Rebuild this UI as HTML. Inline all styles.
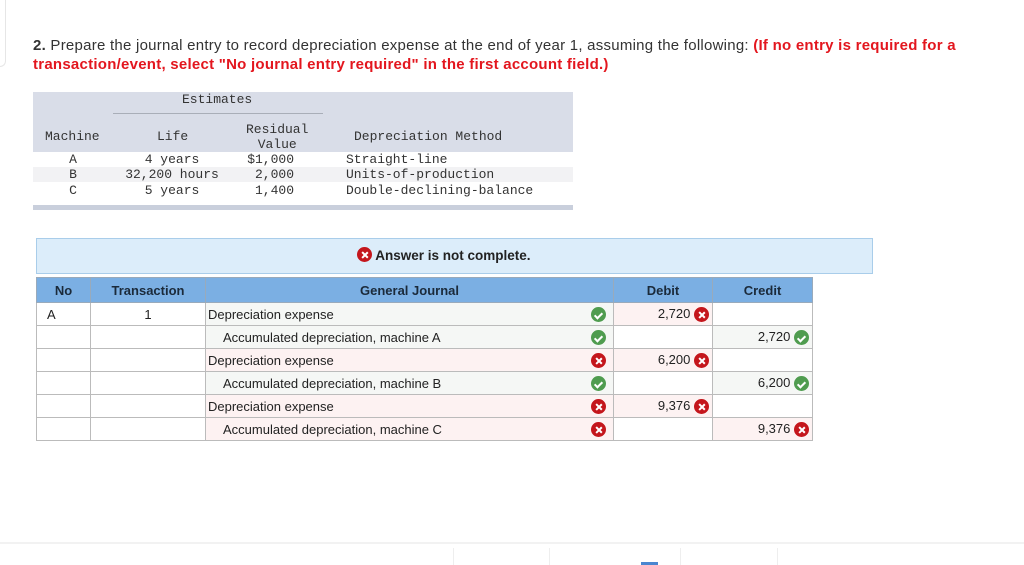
<!DOCTYPE html>
<html><head><meta charset="utf-8"><style>
body{margin:0;width:1024px;height:565px;background:#fff;position:relative;overflow:hidden;font-family:"Liberation Sans",Arial,sans-serif;color:#222}
.a{position:absolute}
.q{left:33px;top:36px;font-size:15px;letter-spacing:0.25px;line-height:19px;color:#333;width:960px}
.q .r{color:#e3161e;font-weight:bold}
.mono{font-family:"Liberation Mono",monospace;font-size:13px;color:#333}
.ic{display:inline-block;width:15px;height:15px;border-radius:50%;vertical-align:middle;position:relative}
.ok{background:#4f9c4f}.no{background:#c4161c}
.ok:after{content:"";position:absolute;left:4.5px;top:3.5px;width:3px;height:6px;border:solid #fff;border-width:0 2px 2px 0;transform:rotate(45deg)}
.no:before,.no:after{content:"";position:absolute;left:7px;top:3.5px;width:1.8px;height:8px;background:#fff;transform:rotate(45deg)}
.no:after{transform:rotate(-45deg)}
table.j{position:absolute;left:36px;top:277px;border-collapse:collapse;font-size:13px}
.j td,.j th{border:1px solid #bbb;height:23px;padding:0;box-sizing:border-box}
.j th{background:#7bafe3;font-weight:bold;color:#1b2a3a;text-align:center;border-color:#9ab;height:25px}
.g{background:#f5f7f5}.p{background:#fdf2f2}
.num{text-align:right;padding-right:3px!important}
</style></head><body>
<div class="a" style="left:0;top:0;width:5px;height:66px;border-right:1px solid #e6e6e6;border-bottom:1px solid #e6e6e6;border-bottom-right-radius:6px"></div>
<div class="a q"><b>2.</b> Prepare the journal entry to record depreciation expense at the end of year 1, assuming the following: <span class="r">(If no entry is required for a transaction/event, select "No journal entry required" in the first account field.)</span></div>

<div class="a" style="left:33px;top:92px;width:540px;height:60px;background:#d9dde8"></div>
<div class="a" style="left:33px;top:167px;width:540px;height:15px;background:#f2f2f4"></div>
<div class="a" style="left:33px;top:205px;width:540px;height:5px;background:#c9cfdc"></div>
<div class="a" style="left:113px;top:113px;width:210px;height:1px;background:#a9aeb8"></div>
<div class="a mono" style="left:182px;top:92px">Estimates</div>
<div class="a mono" style="left:45px;top:129px">Machine</div>
<div class="a mono" style="left:157px;top:129px">Life</div>
<div class="a mono" style="left:246px;top:122px;text-align:center;line-height:15px">Residual<br>Value</div>
<div class="a mono" style="left:354px;top:129px">Depreciation Method</div>
<div class="a mono" style="left:33px;top:152px;width:80px;text-align:center;line-height:15.3px">A<br>B<br>C</div>
<div class="a mono" style="left:113px;top:152px;width:118px;text-align:center;line-height:15.3px">4 years<br>32,200 hours<br>5 years</div>
<div class="a mono" style="left:236px;top:152px;width:58px;text-align:right;line-height:15.3px">$1,000<br>2,000<br>1,400</div>
<div class="a mono" style="left:346px;top:152px;line-height:15.3px">Straight-line<br>Units-of-production<br>Double-declining-balance</div>

<div class="a" style="left:36px;top:238px;width:835px;height:34px;background:#dcedfa;border:1px solid #a9cdea"></div>
<div class="a" style="left:357px;top:247px;font-size:13.5px;font-weight:bold;color:#222"><span class="ic no" style="vertical-align:-2px"></span> Answer is not complete.</div>

<table class="j">
<tr><th style="width:54px">No</th><th style="width:115px">Transaction</th><th style="width:408px">General Journal</th><th style="width:99px">Debit</th><th style="width:100px">Credit</th></tr>
<tr><td style="padding-left:10px">A</td><td style="text-align:center">1</td><td class="g" style="position:relative;padding-left:2px">Depreciation expense<span class="ic ok" style="position:absolute;right:7px;top:4px"></span></td><td class="p num">2,720 <span class="ic no"></span></td><td></td></tr>
<tr><td></td><td></td><td class="g" style="position:relative;padding-left:17px">Accumulated depreciation, machine A<span class="ic ok" style="position:absolute;right:7px;top:4px"></span></td><td></td><td class="g num">2,720 <span class="ic ok"></span></td></tr>
<tr><td></td><td></td><td class="p" style="position:relative;padding-left:2px">Depreciation expense<span class="ic no" style="position:absolute;right:7px;top:4px"></span></td><td class="p num">6,200 <span class="ic no"></span></td><td></td></tr>
<tr><td></td><td></td><td class="g" style="position:relative;padding-left:17px">Accumulated depreciation, machine B<span class="ic ok" style="position:absolute;right:7px;top:4px"></span></td><td></td><td class="g num">6,200 <span class="ic ok"></span></td></tr>
<tr><td></td><td></td><td class="p" style="position:relative;padding-left:2px">Depreciation expense<span class="ic no" style="position:absolute;right:7px;top:4px"></span></td><td class="p num">9,376 <span class="ic no"></span></td><td></td></tr>
<tr><td></td><td></td><td class="p" style="position:relative;padding-left:17px">Accumulated depreciation, machine C<span class="ic no" style="position:absolute;right:7px;top:4px"></span></td><td></td><td class="p num">9,376 <span class="ic no"></span></td></tr>
</table>

<div class="a" style="left:0;top:542px;width:1024px;height:2px;background:#f2f2f2"></div>
<div class="a" style="left:453px;top:548px;width:1px;height:17px;background:#eee"></div>
<div class="a" style="left:549px;top:548px;width:1px;height:17px;background:#eee"></div>
<div class="a" style="left:680px;top:548px;width:1px;height:17px;background:#eee"></div>
<div class="a" style="left:777px;top:548px;width:1px;height:17px;background:#eee"></div>
<div class="a" style="left:641px;top:562px;width:17px;height:3px;background:#4a86d0"></div>
</body></html>
